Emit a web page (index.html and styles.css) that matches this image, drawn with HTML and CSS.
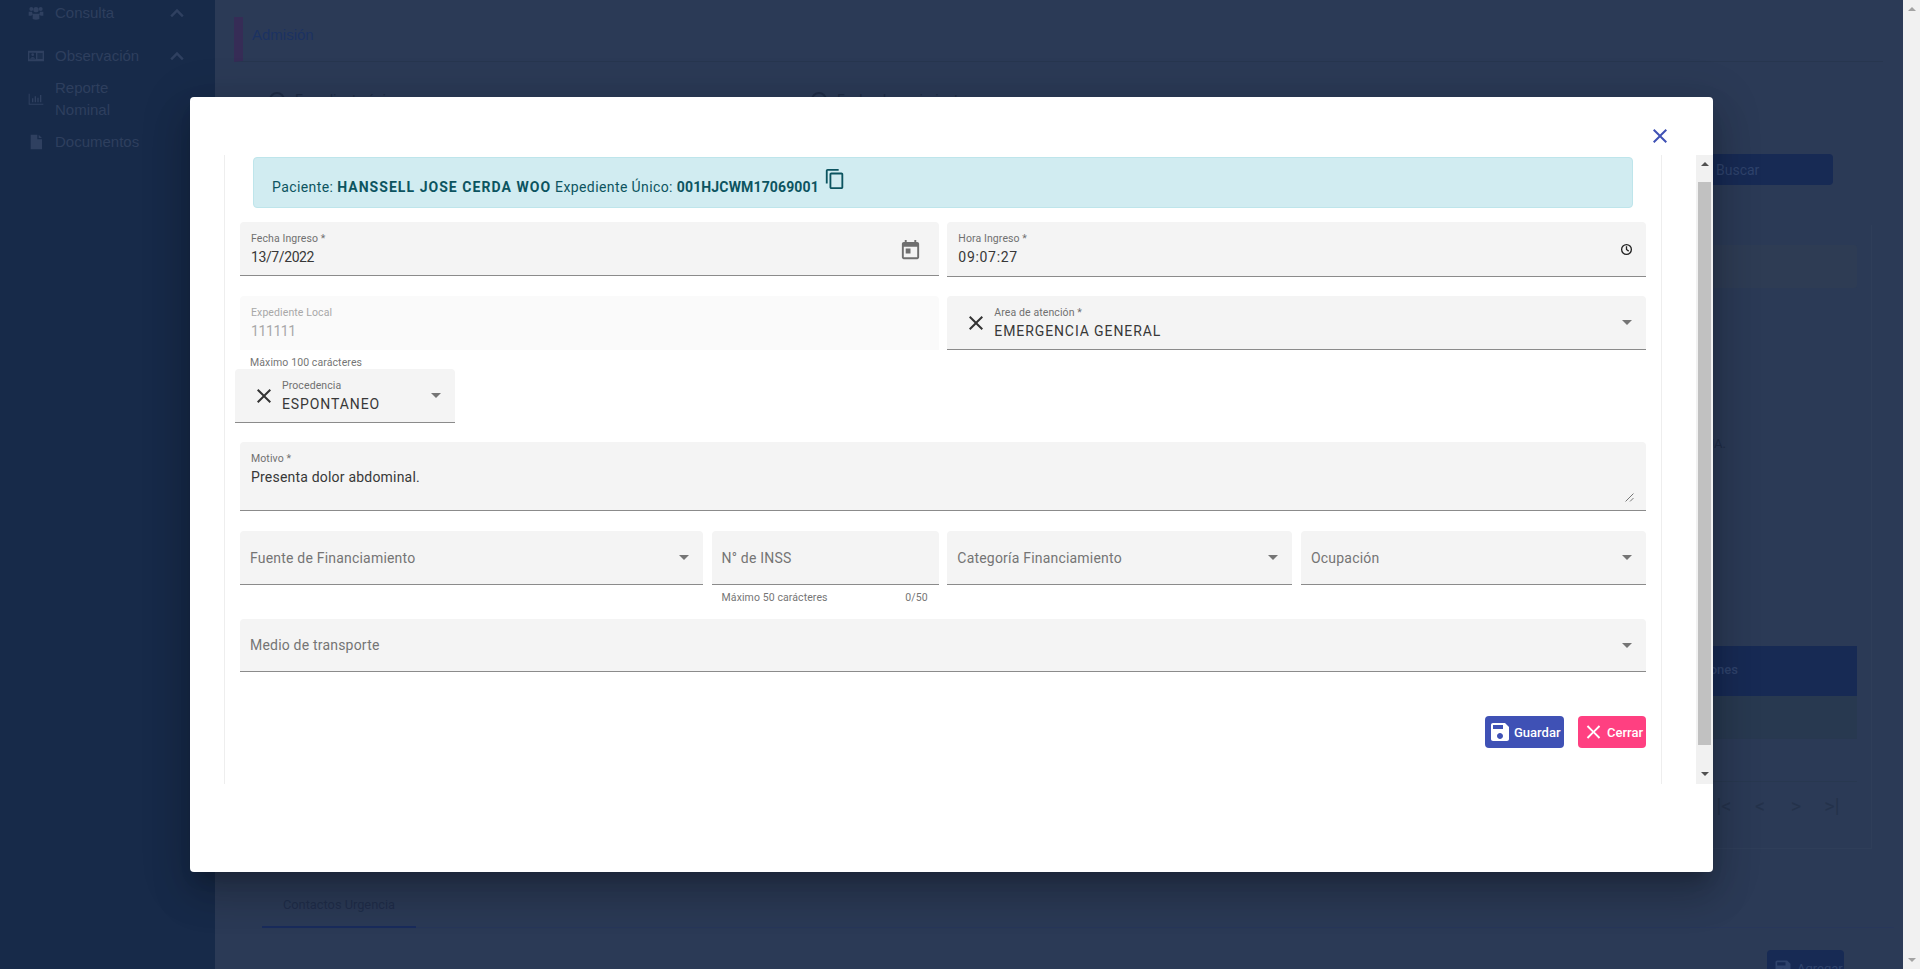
FILE: index.html
```html
<!DOCTYPE html>
<html lang="es">
<head>
	<meta charset="UTF-8">
	<title>Admisión</title>
	<link rel="stylesheet" href="styles.css">
</head>
<body>
<div class="app">
	<nav class="sidebar">
		<div class="nav-item nav-first">
			<svg class="nav-icon" viewBox="0 0 24 24"><circle cx="5" cy="6" r="3"/><circle cx="19" cy="6" r="3"/><circle cx="12" cy="7" r="4"/><path d="M1 10h5l1 4-2 2H1zM23 10h-5l-1 4 2 2h4zM7 13h10v8q-5 2-10 0z"/></svg>
			<span class="nav-text">Consulta</span>
			<svg class="nav-chevron" viewBox="0 0 24 24"><path d="M12 7l-8 8 2 2 6-6 6 6 2-2z"/></svg>
		</div>
		<div class="nav-item nav-group">
			<svg class="nav-icon" viewBox="0 0 24 24"><path d="M0 4h24v16H0zM2 7v10h10V7zm12 1v2h8V8zm0 3v2h8v-2zm0 3v2h8v-2z" fill-rule="evenodd"/><circle cx="7" cy="10" r="2"/><path d="M3 16q4-5 8 0z"/></svg>
			<span class="nav-text">Observación</span>
			<svg class="nav-chevron" viewBox="0 0 24 24"><path d="M12 7l-8 8 2 2 6-6 6 6 2-2z"/></svg>
		</div>
		<div class="nav-item">
			<svg class="nav-icon" viewBox="0 0 24 24"><path d="M1 4h1.500v15H23v1.500H1zM6 11h2v6H6zM10 8h2v9h-2zM14 10h2v7h-2zM18 6h2v11h-2z"/></svg>
			<span class="nav-text">Reporte<br>Nominal</span>
		</div>
		<div class="nav-item">
			<svg class="nav-icon" viewBox="0 0 24 24"><path d="M4 1h10v7h7v15H4zM16 1l5 5h-5z"/></svg>
			<span class="nav-text">Documentos</span>
		</div>
	</nav>

	<main class="page">
		<div class="page-title"><span>Admisión</span></div>
		<div class="radio-row">
			<span class="radio"><i></i>Expediente único</span>
			<span class="radio"><i></i>Fecha de nacimiento</span>
		</div>
		<div class="search-row"><span class="dim-btn search-btn">Buscar</span></div>
		<section class="result-card">
			<div class="result-bar"></div>
			<div class="result-text">MANAGUA.</div>
			<div class="result-head"><span>Acciones</span></div>
			<div class="result-row result-row-odd"></div>
			<div class="result-row"></div>
			<div class="pager"><span>|&lt;</span><span>&lt;</span><span>&gt;</span><span>&gt;|</span></div>
		</section>
		<div class="tabs"><span class="tab">Contactos Urgencia</span></div>
		<div class="add-row">
			<span class="dim-btn add-btn">
				<svg viewBox="0 0 24 24"><path d="M17 3H5c-1.110 0-2 .9-2 2v14c0 1.100.89 2 2 2h14c1.100 0 2-.9 2-2V7l-4-4zm-5 16c-1.660 0-3-1.340-3-3s1.340-3 3-3 3 1.340 3 3-1.340 3-3 3zm3-10H5V5h10v4z"/></svg>
				Agregar
			</span>
		</div>
	</main>

	<div class="page-scrollbar">
		<span class="arrow-up"></span>
		<span class="arrow-down"></span>
	</div>
</div>

<div class="modal">
	<div class="modal-head">
		<svg class="modal-close" viewBox="0 0 24 24"><path d="M19 6.410L17.590 5 12 10.590 6.410 5 5 6.410 10.590 12 5 17.590 6.410 19 12 13.410 17.590 19 19 17.590 13.410 12z"/></svg>
	</div>
	<div class="modal-body">
		<div class="modal-scroll">
			<div class="form">
				<div class="alert">
					Paciente: <b class="alert-name">HANSSELL JOSE CERDA WOO</b> Expediente Único: <b>001HJCWM17069001</b>
					<svg class="copy-icon" viewBox="0 0 24 24"><path d="M16 1H4c-1.100 0-2 .9-2 2v14h2V3h12V1zm3 4H8c-1.100 0-2 .9-2 2v14c0 1.100.9 2 2 2h11c1.100 0 2-.9 2-2V7c0-1.100-.9-2-2-2zm0 16H8V7h11v14z"/></svg>
				</div>

				<div class="row row-first">
					<div class="field span6">
						<div class="field-text">
							<span class="field-label">Fecha Ingreso *</span>
							<span class="field-value value-num">13/7/2022</span>
						</div>
						<svg class="date-icon" viewBox="0 0 24 24"><path d="M19 3h-1V1h-2v2H8V1H6v2H5c-1.110 0-1.990.9-1.990 2L3 19c0 1.100.89 2 2 2h14c1.100 0 2-.9 2-2V5c0-1.100-.9-2-2-2zm0 16H5V8h14v11zM7 10h5v5H7z"/></svg>
					</div>
					<div class="field span6 field-tall">
						<div class="field-text">
							<span class="field-label">Hora Ingreso *</span>
							<span class="field-value time-value">09:07:27</span>
						</div>
						<svg class="clock-icon" viewBox="0 0 12 12"><circle cx="6" cy="6" r="4.500"/><path d="M6 3v3l2 1.500"/></svg>
					</div>
				</div>

				<div class="row">
					<div class="field span6 field-disabled">
						<div class="field-text">
							<span class="field-label">Expediente Local</span>
							<span class="field-value value-num">111111</span>
						</div>
					</div>
					<div class="field span6 field-clear">
						<svg class="clear-icon" viewBox="0 0 24 24"><path d="M19 6.410L17.590 5 12 10.590 6.410 5 5 6.410 10.590 12 5 17.590 6.410 19 12 13.410 17.590 19 19 17.590 13.410 12z"/></svg>
						<div class="field-text">
							<span class="field-label">Area de atención *</span>
							<span class="field-value value-caps">EMERGENCIA GENERAL</span>
						</div>
						<span class="select-arrow"></span>
					</div>
				</div>
				<div class="hint hint-short"><span>Máximo 100 carácteres</span></div>

				<div class="field field-clear field-origin">
					<svg class="clear-icon" viewBox="0 0 24 24"><path d="M19 6.410L17.590 5 12 10.590 6.410 5 5 6.410 10.590 12 5 17.590 6.410 19 12 13.410 17.590 19 19 17.590 13.410 12z"/></svg>
					<div class="field-text">
						<span class="field-label">Procedencia</span>
						<span class="field-value value-caps">ESPONTANEO</span>
					</div>
					<span class="select-arrow"></span>
				</div>

				<div class="field field-area">
					<div class="field-text">
						<span class="field-label">Motivo *</span>
						<span class="field-value value-long">Presenta dolor abdominal.</span>
					</div>
					<svg class="resize-grip" viewBox="0 0 8 8"><path d="M7.500 .5L.5 7.500M7.500 4.500L4.500 7.500"/></svg>
				</div>

				<div class="row row-funding">
					<div class="field span4 field-empty"><span class="placeholder">Fuente de Financiamiento</span><span class="select-arrow"></span></div>
					<div class="col span2">
						<div class="field field-empty"><span class="placeholder">N° de INSS</span></div>
						<div class="hint hint-tall"><span>Máximo 50 carácteres</span><span>0/50</span></div>
					</div>
					<div class="field span3 field-empty"><span class="placeholder">Categoría Financiamiento</span><span class="select-arrow"></span></div>
					<div class="field span3 field-empty"><span class="placeholder">Ocupación</span><span class="select-arrow"></span></div>
				</div>

				<div class="field field-empty field-transport"><span class="placeholder">Medio de transporte</span><span class="select-arrow"></span></div>

				<div class="actions">
					<button class="btn btn-save">
						<svg viewBox="0 0 24 24"><path d="M17 3H5c-1.110 0-2 .9-2 2v14c0 1.100.89 2 2 2h14c1.100 0 2-.9 2-2V7l-4-4zm-5 16c-1.660 0-3-1.340-3-3s1.340-3 3-3 3 1.340 3 3-1.340 3-3 3zm3-10H5V5h10v4z"/></svg>
						Guardar
					</button>
					<button class="btn btn-close">
						<svg viewBox="0 0 24 24"><path d="M19 6.410L17.590 5 12 10.590 6.410 5 5 6.410 10.590 12 5 17.590 6.410 19 12 13.410 17.590 19 19 17.590 13.410 12z"/></svg>
						Cerrar
					</button>
				</div>
			</div>
		</div>
		<div class="modal-scrollbar">
			<span class="bar-arrow-up"></span>
			<span class="bar-thumb"></span>
			<span class="bar-arrow-down"></span>
		</div>
	</div>
</div>
</body>
</html>
```

FILE: styles.css
```css
* { box-sizing: border-box; margin: 0; padding: 0; }
html, body { height: 969px; overflow: hidden; }
body { font-family: Roboto, "Liberation Sans", sans-serif; font-size: 14px; color: #333; background: #2b3a56; }

/* page behind the dialog */
.app { display: flex; height: 969px; overflow: hidden; }

.sidebar { width: 215px; flex: none; background: #172a49; padding-top: 2px; color: #2e3f5e; font-family: "Liberation Sans", Arial, sans-serif; font-size: 15px; line-height: 22px; }
.nav-item { display: flex; align-items: center; padding-left: 28px; margin-bottom: 10px; }
.nav-first { margin-bottom: 21px; }
.nav-icon { width: 16px; height: 16px; margin-right: 11px; fill: #2f4060; flex: none; }
.nav-text { flex: 1; }
.nav-chevron { width: 20px; height: 20px; margin-right: 28px; fill: #2f4060; }

.page { flex: 1; padding: 17px 31px 0 19px; color: #1c2f55; }
.page-title { height: 45px; border-left: 9px solid #362c56; border-bottom: 1px solid #27364f; margin-right: -11px; padding: 7px 0 0 9px; color: #1b3262; font-family: "Liberation Sans", Arial, sans-serif; font-size: 15px; line-height: 22px; }
.radio-row { display: flex; height: 30px; padding: 30px 0 0 35px; color: #1e2c45; }
.radio { display: flex; width: 542px; gap: 10px; }
.radio i { width: 16px; height: 16px; border: 2px solid #1e2c45; border-radius: 50%; }
.search-row { display: flex; justify-content: flex-end; margin: 62px 39px 0 0; }
.dim-btn { display: flex; align-items: center; background: #172a54; color: #2f436c; border-radius: 4px; }
.search-btn { width: 480px; height: 31px; padding-left: 363px; }
.result-card { height: 624px; margin: 40px 0 0 28px; border: 1px solid #2f3e59; border-left: 0; border-top: 0; padding: 20px 14px 0 0; }
.result-bar { height: 43px; background: #2e3c54; border-radius: 3px; }
.result-text { margin-top: 148px; height: 34px; text-align: right; padding-right: 131px; color: #1f2d47; font-size: 13px; }
.result-head { height: 50px; margin-top: 176px; background: #172a54; color: #2f436c; text-align: right; padding: 16px 119px 0 0; font-size: 13px; font-weight: 500; }
.result-row { height: 43px; border-bottom: 1px solid #283850; }
.result-row-odd { background: #283950; }
.pager { display: flex; justify-content: flex-end; padding: 12px 7px 0 0; font-size: 20px; line-height: 24px; color: #24324b; }
.pager span { width: 36px; text-align: center; }
.tabs { margin: 47px -22px 0 28px; height: 32px; border-bottom: 1px solid #28375a; }
.tab { display: block; width: 154px; height: 32px; padding-top: 1px; text-align: center; border-bottom: 2px solid #1a2c5c; color: #1f2d4a; font-size: 12.800px; }
.add-row { display: flex; justify-content: flex-end; margin: 22px 28px 0 0; }
.add-btn { width: 77px; height: 36px; gap: 4px; padding-left: 6px; font-size: 13px; }
.add-btn svg { width: 20px; height: 20px; fill: #2f436c; }

.page-scrollbar { width: 17px; flex: none; background: #f1f1f1; display: flex; flex-direction: column; justify-content: space-between; align-items: center; padding: 7px 0; }
.arrow-up, .arrow-down, .bar-arrow-up, .bar-arrow-down { width: 0; height: 0; border-left: 4.500px solid transparent; border-right: 4.500px solid transparent; }
.arrow-up { border-bottom: 4px solid #a3a3a3; }
.arrow-down { border-top: 4px solid #a3a3a3; }

/* dialog */
.modal { position: absolute; left: 190px; top: 97px; width: 1523px; height: 775px; background: #fff; border-radius: 4px; display: flex; flex-direction: column; box-shadow: 0 11px 15px -7px rgba(0,0,0,.2), 0 24px 38px 3px rgba(0,0,0,.14), 0 9px 46px 8px rgba(0,0,0,.12); }
.modal-head { height: 58px; flex: none; display: flex; justify-content: flex-end; padding: 27px 41px 0 0; }
.modal-close { width: 24px; height: 24px; fill: #3f51b5; }
.modal-body { display: flex; height: 629px; }
.modal-scroll { flex: 1; padding: 0 34px; }
.form { height: 100%; border-left: 1px solid #eee; border-right: 1px solid #eee; padding: 2px 15px 0; }

.alert { height: 51px; margin: 0 13px 14px; padding: 10px 18px 0; background: #d1ecf1; border: 1px solid #bee5eb; border-radius: 4px; color: #0c5460; font-size: 14px; letter-spacing: .4px; line-height: 32px; white-space: nowrap; }
.alert b { font-weight: 700; letter-spacing: .15px; }
.alert .alert-name { letter-spacing: 1.050px; }
.copy-icon { width: 22px; height: 22px; fill: #0c5460; margin-left: 1px; vertical-align: 2px; }

.row { display: grid; grid-template-columns: repeat(12, 1fr); column-gap: 8.670px; }
.row-first { margin-bottom: 19px; }
.span2 { grid-column: span 2; }
.span3 { grid-column: span 3; }
.span4 { grid-column: span 4; }
.span6 { grid-column: span 6; }

.field { display: flex; align-items: center; height: 54px; padding: 0 10px; background: #f4f4f4; border-bottom: 1px solid #8b8b8b; border-radius: 4px 4px 0 0; }
.field-tall { height: 55px; }
.field-text { flex: 1; display: flex; flex-direction: column; align-self: flex-start; padding: 10px 0 0 1px; min-width: 0; }
.field-label { font-size: 10.500px; line-height: 14px; letter-spacing: .1px; color: #707070; }
.field-value { font-size: 14px; line-height: 22px; color: #383838; }
.value-num { letter-spacing: -.4px; }
.value-caps { letter-spacing: .9px; }
.value-long { letter-spacing: .2px; }
.time-value { letter-spacing: .7px; }
.field-disabled { background: #fafafa; border-bottom: 0; }
.field-disabled .field-label, .field-disabled .field-value { color: #a8a8a8; }
.field-clear { padding-left: 17px; }
.clear-icon { width: 24px; height: 24px; flex: none; margin-right: 5px; fill: #333; }
.field-origin { width: 220px; margin-left: -5px; }
.field-area { position: relative; height: 69px; margin-top: 19px; margin-bottom: 20px; }
.field-empty { justify-content: space-between; }
.placeholder { font-size: 14px; letter-spacing: .2px; color: #757575; }
.field-transport { height: 53px; }

.select-arrow { width: 0; height: 0; margin-right: 4px; border-left: 5px solid transparent; border-right: 5px solid transparent; border-top: 5px solid #757575; }
.date-icon { width: 23px; height: 23px; margin: 4px 7px 0 0; fill: #6f6f6f; }
.clock-icon { width: 13px; height: 13px; margin-right: 3px; fill: none; stroke: #222; stroke-width: 1.200; }
.resize-grip { position: absolute; right: 12px; bottom: 8px; width: 9px; height: 9px; fill: none; stroke: #666; stroke-width: .8; }

.hint { display: flex; justify-content: space-between; padding: 6px 11px 0 10px; font-size: 10.500px; letter-spacing: .1px; line-height: 14px; color: #757575; }
.hint-short { height: 19px; }
.hint-tall { height: 34px; }

.actions { display: flex; justify-content: flex-end; gap: 14px; margin-top: 44px; }
.btn { display: flex; align-items: center; height: 32px; border: 0; border-radius: 4px; color: #fff; font-family: inherit; font-size: 13px; font-weight: 500; padding: 0 3px; }
.btn svg { width: 24px; height: 24px; fill: #fff; margin-right: 2px; }
.btn-save { width: 79px; background: #3f51b5; }
.btn-close { width: 68px; background: #ff4081; padding-left: 4px; }

.modal-scrollbar { width: 17px; flex: none; background: #f1f1f1; display: flex; flex-direction: column; align-items: center; padding-top: 7px; }
.bar-arrow-up { border-bottom: 4px solid #505050; }
.bar-thumb { width: 13px; height: 563px; margin-top: 16px; background: #c1c1c1; }
.bar-arrow-down { margin-top: 27px; border-top: 4px solid #505050; }
```
